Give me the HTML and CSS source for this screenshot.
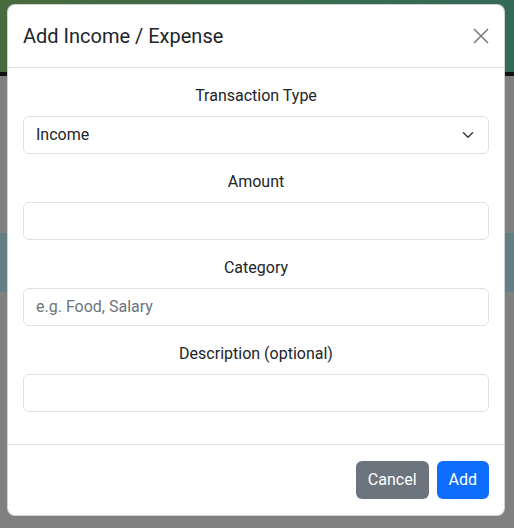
FILE: index.html
```html
<!DOCTYPE html>
<html lang="en">
<head>
<meta charset="utf-8">
<title>Add Income / Expense</title>
<link rel="stylesheet" href="styles.css">
</head>
<body>
<div class="page">
  <header class="topbar"></header>
  <div class="topline"></div>
  <div class="content">
    <div class="alert"></div>
  </div>
</div>

<div class="modal">
  <div class="modal-header">
    <h5 class="modal-title">Add Income / Expense</h5>
    <button class="btn-close" type="button" aria-label="Close">
      <svg viewBox="0 0 16 16" width="16" height="16"><path d="M1 1 15 15M15 1 1 15" stroke="#000" stroke-width="1.6" fill="none"/></svg>
    </button>
  </div>
  <div class="modal-body">
    <div class="group">
      <label class="label">Transaction Type</label>
      <div class="select">
        <span>Income</span>
        <svg class="chev" viewBox="0 0 16 16" width="16" height="12"><path d="m2 5 6 6 6-6" stroke="#343a40" stroke-width="2" fill="none" stroke-linecap="round" stroke-linejoin="round"/></svg>
      </div>
    </div>
    <div class="group">
      <label class="label">Amount</label>
      <div class="input"></div>
    </div>
    <div class="group">
      <label class="label">Category</label>
      <div class="input placeholder">e.g. Food, Salary</div>
    </div>
    <div class="group">
      <label class="label">Description (optional)</label>
      <div class="input"></div>
    </div>
  </div>
  <div class="modal-footer">
    <button class="btn btn-secondary" type="button">Cancel</button>
    <button class="btn btn-primary" type="button">Add</button>
  </div>
</div>
</body>
</html>
```

FILE: styles.css
```css
* { box-sizing: border-box; }
html, body { margin: 0; padding: 0; }
body {
  width: 514px;
  height: 528px;
  overflow: hidden;
  background: #808080;
  font-family: Roboto, "Liberation Sans", sans-serif;
  color: #212529;
  position: relative;
}
.page { display: flex; flex-direction: column; }
.topbar {
  height: 72px;
  background: linear-gradient(90deg, #486b3c 0%, #3a6b4c 55%, #336b59 100%);
}
.topline { height: 4px; background: #111; }
.content { padding-top: 157px; }
.alert { height: 59px; background: #637e82; }

.modal {
  position: absolute;
  left: 7px;
  top: 4px;
  width: 498px;
  background: #fff;
  border: 1px solid rgba(0,0,0,.175);
  border-radius: 8px;
  display: flex;
  flex-direction: column;
}
.modal-header {
  display: flex;
  align-items: center;
  justify-content: space-between;
  padding: 16px 15px;
  border-bottom: 1px solid #dee2e6;
}
.modal-title {
  margin: 0;
  font-size: 20px;
  line-height: 30px;
  font-weight: 400;
}
.btn-close {
  width: 32px; height: 30px;
  margin-right: -8px;
  border: 0; background: transparent; padding: 0;
  opacity: .5;
  display: flex; align-items: center; justify-content: center;
}
.modal-body { padding: 16px 15px 32px; display: flex; flex-direction: column; gap: 16px; }
.group { display: flex; flex-direction: column; gap: 8px; }
.label { font-size: 16px; line-height: 24px; text-align: center; }
.select, .input {
  height: 38px;
  border: 1px solid #dee2e6;
  border-radius: 6px;
  padding: 6px 12px;
  font-size: 16px;
  line-height: 24px;
}
.select { display: flex; align-items: center; justify-content: space-between; }
.placeholder { color: #6c757d; }
.modal-footer {
  display: flex;
  justify-content: flex-end;
  gap: 8px;
  padding: 16px 15px;
  border-top: 1px solid #dee2e6;
}
.btn {
  height: 38px;
  border: 0;
  border-radius: 6px;
  padding: 6px 12px;
  font-family: inherit;
  font-size: 16px;
  line-height: 24px;
  color: #fff;
}
.btn-secondary { background: #6c757d; }
.btn-primary { background: #0d6efd; }
```
